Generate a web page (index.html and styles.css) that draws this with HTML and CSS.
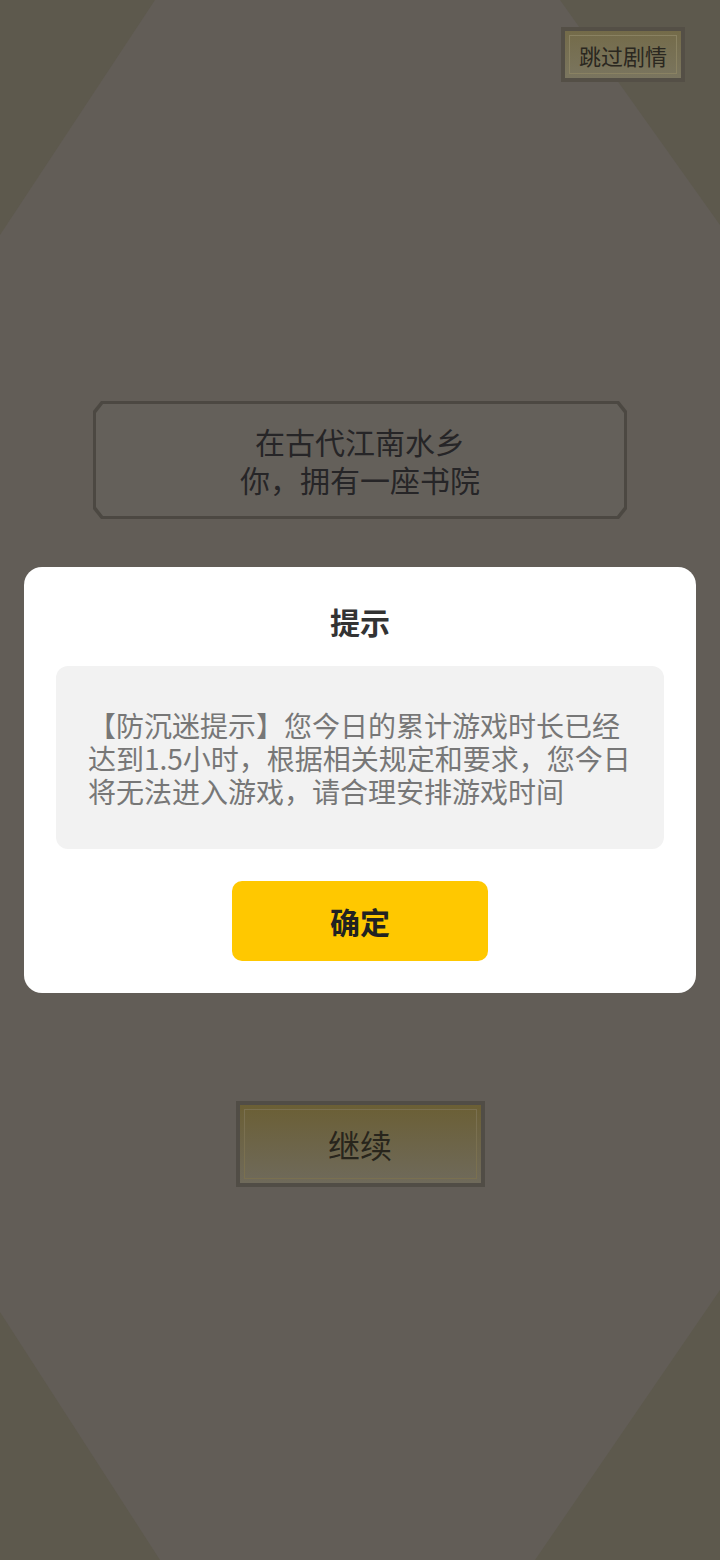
FILE: index.html
```html
<!DOCTYPE html>
<html lang="zh-CN">
<head>
    <meta charset="UTF-8">
    <meta name="viewport" content="width=device-width, initial-scale=1.0">
    <title>书院</title>
    <link rel="stylesheet" href="styles.css">
</head>
<body>
    <div class="scene">
        <div class="top-bar">
            <button class="skip">
                <span class="skip-inner">跳过剧情</span>
            </button>
        </div>
        <div class="story">
            <div class="story-inner">
                <p>在古代江南水乡<br>你，拥有一座书院</p>
            </div>
        </div>
        <button class="next">
            <span class="next-inner">继续</span>
        </button>
    </div>

    <div class="modal">
        <div class="dialog">
            <h2 class="dialog-title">提示</h2>
            <div class="dialog-body">
                【防沉迷提示】您今日的累计游戏时长已经达到1.5小时，根据相关规定和要求，您今日将无法进入游戏，请合理安排游戏时间
            </div>
            <button class="confirm">确定</button>
        </div>
    </div>
</body>
</html>
```

FILE: styles.css
```css
* {
    box-sizing: border-box;
}
body {
    margin: 0;
    font-family: "Noto Sans CJK SC", "Noto Sans", sans-serif;
    background: #5d594d;
    height: 1560px;
    overflow: hidden;
}
.scene {
    position: relative;
    height: 1560px;
    display: flex;
    flex-direction: column;
    align-items: center;
}
/* lighter hexagon over the darker corners */
.scene::before {
    content: "";
    position: absolute;
    inset: 0;
    background: #625d57;
    clip-path: polygon(155px 0, 560px 0, 720px 225px, 720px 1290px, 535px 1560px, 160px 1560px, 0 1312px, 0 235px);
    z-index: 0;
}
.scene > * {
    position: relative;
    z-index: 1;
}
.top-bar {
    width: 100%;
    display: flex;
    justify-content: flex-end;
    padding: 27px 35px 0 0;
}
.skip {
    width: 124px;
    height: 55px;
    padding: 4px;
    border: none;
    background: #544f46;
    font-family: inherit;
}
.skip-inner {
    position: relative;
    display: flex;
    align-items: center;
    justify-content: center;
    height: 100%;
    background: linear-gradient(#746b49, #7a755f);
    font-size: 22px;
    color: #2a2720;
}
.skip-inner::after,
.next-inner::after {
    content: "";
    position: absolute;
    inset: 4px;
    border: 1px solid #8a8262;
}
.story {
    margin-top: 319px;
    width: 534px;
    height: 118px;
    padding: 3px;
    background: #4c4842;
    clip-path: polygon(8px 0, calc(100% - 8px) 0, 100% 10px, 100% calc(100% - 10px), calc(100% - 8px) 100%, 8px 100%, 0 calc(100% - 10px), 0 10px);
}
.story-inner {
    height: 100%;
    display: flex;
    flex-direction: column;
    justify-content: center;
    align-items: center;
    background: #64605a;
    clip-path: polygon(7px 0, calc(100% - 7px) 0, 100% 9px, 100% calc(100% - 9px), calc(100% - 7px) 100%, 7px 100%, 0 calc(100% - 9px), 0 9px);
}
.story-inner p {
    margin: 0;
    text-align: center;
    font-size: 30px;
    line-height: 38px;
    color: #262527;
}
.next {
    margin-top: 582px;
    width: 249px;
    height: 86px;
    padding: 4px;
    border: none;
    background: #514d46;
    font-family: inherit;
}
.next-inner {
    position: relative;
    display: flex;
    align-items: center;
    justify-content: center;
    height: 100%;
    background: linear-gradient(#6b5f35, #6f6a5b);
    font-size: 32px;
    color: #28251c;
}
.next-inner::after {
    border-color: #7a7050;
}
.modal {
    position: fixed;
    inset: 0;
    z-index: 10;
    display: flex;
    justify-content: center;
    align-items: flex-start;
    padding-top: 567px;
}
.dialog {
    width: 672px;
    background: #fff;
    border-radius: 18px;
    padding: 34px 32px 32px;
    display: flex;
    flex-direction: column;
    align-items: center;
}
.dialog-title {
    margin: 0;
    font-size: 30px;
    line-height: 40px;
    font-weight: bold;
    color: #333;
}
.dialog-body {
    margin-top: 25px;
    width: 100%;
    background: #f2f2f2;
    border-radius: 12px;
    padding: 43px 28px 41px 32px;
    font-size: 28px;
    line-height: 33px;
    color: #777;
}
.confirm {
    margin-top: 32px;
    width: 256px;
    height: 80px;
    border: none;
    border-radius: 10px;
    background: #ffc800;
    font-family: inherit;
    font-size: 30px;
    font-weight: bold;
    color: #222;
}
```
